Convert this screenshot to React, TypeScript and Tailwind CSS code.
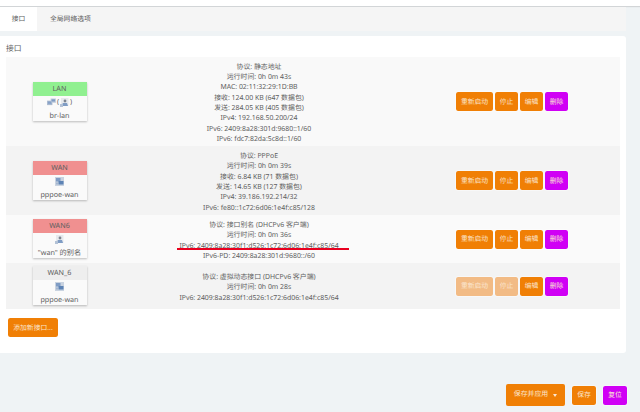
import React from 'react';

const FONT = '"Noto Sans", "Noto Sans CJK SC", sans-serif';

function BridgeIcon() {
  return (
    <svg width="9" height="8" viewBox="0 0 10 9">
      <rect x="0" y="3" width="6" height="5" fill="#a9b9cf" />
      <rect x="4" y="0.5" width="6" height="5" fill="#c6d0de" />
      <rect x="5" y="1.5" width="4" height="2.5" fill="#7f9cc4" />
      <rect x="1" y="4" width="4" height="2.5" fill="#86a1c8" />
    </svg>
  );
}

function PppoeIcon() {
  return (
    <svg width="9" height="9" viewBox="0 0 9 9">
      <rect width="9" height="9" fill="#c9d3e0" />
      <rect x="1" y="1" width="4.5" height="3.5" fill="#7f9cc4" />
      <rect x="3.5" y="4" width="5" height="3.5" fill="#5d83b5" />
      <rect x="1" y="5.5" width="2" height="2" fill="#a3b6d0" />
    </svg>
  );
}

function AliasIcon() {
  return (
    <svg width="9" height="9" viewBox="0 0 9 9">
      <rect x="1" y="0" width="7.5" height="8" fill="#e6e9ed" />
      <circle cx="5" cy="3" r="1.4" fill="#7d8590" />
      <path d="M1 8 L3 5 L7 5 L8 8 Z" fill="#7f9cc4" />
      <rect x="0" y="6" width="3" height="3" fill="#b3c2d6" />
    </svg>
  );
}

function Badge({ name, head, children, label }: { name: string; head: string; children: React.ReactNode; label: string }) {
  return (
    <div className="w-[54px] bg-[#fafafa] text-center text-[7.2px] leading-[11px] text-[#606060] shadow-[0_1px_2px_rgba(0,0,0,0.25)]">
      <div className={`h-[14px] leading-[15px] ${head}`}>{name}</div>
      <div className="flex h-[12px] items-center justify-center gap-[1px] pt-[1px]">{children}</div>
      <div className="h-[13px] pt-[2px] leading-[13px]">{label}</div>
    </div>
  );
}

function Btn({ text, color = 'orange', dim, className = '' }: { text: string; color?: 'orange' | 'pink'; dim?: boolean; className?: string }) {
  const bg = color === 'pink' ? 'bg-[#d000f5]' : dim ? 'bg-[#f2bb85]' : 'bg-[#f07f05]';
  return (
    <div className={`flex h-[19px] items-center justify-center rounded-[2px] pt-[1px] text-[6.8px] text-[#fbe6d0] outline outline-1 outline-white/40 ${bg} ${className}`}>
      {text}
    </div>
  );
}

function Actions({ dim }: { dim?: boolean }) {
  return (
    <div className="flex gap-[2px] pl-[51px]">
      <Btn text="重新启动" dim={dim} className="w-[37px]" />
      <Btn text="停止" dim={dim} className="w-[23px]" />
      <Btn text="编辑" className="w-[23px]" />
      <Btn text="删除" color="pink" className="w-[23px]" />
    </div>
  );
}

function Row({ h, bg, badge, lines, dim }: { h: string; bg: string; badge: React.ReactNode; lines: string[]; dim?: boolean }) {
  return (
    <div className={`grid grid-cols-[107px_292px_1fr] items-center ${h} ${bg}`}>
      <div className="flex justify-center pb-[1px]">{badge}</div>
      <div className="pt-[5px] text-center text-[6.9px] leading-[10.3px] text-[#606060]">
        {lines.map((l) => (
          <div key={l}>{l}</div>
        ))}
      </div>
      <Actions dim={dim} />
    </div>
  );
}

export default function App() {
  return (
    <div className="relative h-[412px] w-[640px] overflow-hidden bg-[#eff3f5] [text-rendering:geometricPrecision]" style={{ fontFamily: FONT }}>
      <div className="h-[6px] bg-white shadow-[0_1px_1px_rgba(0,0,0,0.12)]" />
      <div className="mt-[1px] flex h-[24px] w-[626px] items-stretch bg-[#f5f5f5] text-[6.8px] text-[#606060]">
        <div className="flex w-[37px] items-center justify-center bg-white">接口</div>
        <div className="flex items-center pl-[13px]">全局网络选项</div>
      </div>

      <div className="mt-[5px] h-[317px] w-[626px] rounded-br-[3px] rounded-tr-[3px] bg-white px-[6px]">
        <div className="h-[21px] pt-[6px] text-[7.8px] leading-[14px] text-[#606060]">接口</div>
        <Row
          h="h-[89px]"
          bg="bg-[#f9f9f9]"
          badge={
            <Badge name="LAN" head="bg-[#90f090]" label="br-lan">
              <BridgeIcon />
              <span className="text-[7px] leading-none">(</span>
              <AliasIcon />
              <span className="text-[7px] leading-none">)</span>
            </Badge>
          }
          lines={[
            '协议: 静态地址',
            '运行时间: 0h 0m 43s',
            'MAC: 02:11:32:29:1D:BB',
            '接收: 124.00 KB (647 数据包)',
            '发送: 284.05 KB (405 数据包)',
            'IPv4: 192.168.50.200/24',
            'IPv6: 2409:8a28:301d:9680::1/60',
            'IPv6: fdc7:82da:5c8d::1/60',
          ]}
        />
        <Row
          h="h-[69px]"
          bg="bg-[#f3f3f3]"
          badge={
            <Badge name="WAN" head="bg-[#f09090]" label="pppoe-wan">
              <PppoeIcon />
            </Badge>
          }
          lines={[
            '协议: PPPoE',
            '运行时间: 0h 0m 39s',
            '接收: 6.84 KB (71 数据包)',
            '发送: 14.65 KB (127 数据包)',
            'IPv4: 39.186.192.214/32',
            'IPv6: fe80::1c72:6d06:1e4f:c85/128',
          ]}
        />
        <Row
          h="h-[48px]"
          bg="bg-[#fafafa]"
          badge={
            <Badge name="WAN6" head="bg-[#f09090]" label={'"wan" 的别名'}>
              <AliasIcon />
            </Badge>
          }
          lines={[
            '协议: 接口别名 (DHCPv6 客户端)',
            '运行时间: 0h 0m 36s',
            'IPv6: 2409:8a28:30f1:d526:1c72:6d06:1e4f:c85/64',
            'IPv6-PD: 2409:8a28:301d:9680::/60',
          ]}
        />
        <Row
          h="h-[46px]"
          bg="bg-[#f3f3f3]"
          dim
          badge={
            <Badge name="WAN_6" head="bg-[#eeeeee]" label="pppoe-wan">
              <PppoeIcon />
            </Badge>
          }
          lines={[
            '协议: 虚拟动态接口 (DHCPv6 客户端)',
            '运行时间: 0h 0m 28s',
            'IPv6: 2409:8a28:30f1:d526:1c72:6d06:1e4f:c85/64',
          ]}
        />
        <div className="pl-[2px] pt-[9px]">
          <Btn text="添加新接口..." className="w-[50px]" />
        </div>
      </div>

      <div className="mt-[31px] flex w-[627px] items-center justify-end gap-[7px]">
        <div className="flex h-[22px] w-[59px] items-center justify-center gap-[5px] rounded-[2px] bg-[#f07f05] text-[6.9px] text-[#fbe6d0]">
          保存并应用
          <span className="h-0 w-0 border-x-[2px] border-t-[3px] border-x-transparent border-t-[#fbe6d0]" />
        </div>
        <Btn text="保存" className="w-[24px]" />
        <Btn text="复位" color="pink" className="w-[24px]" />
      </div>

      {/* red annotation under the IPv6 line */}
      <div className="absolute left-[177px] top-[248px] h-[2px] w-[172px] bg-[#e8001f]" />
    </div>
  );
}
